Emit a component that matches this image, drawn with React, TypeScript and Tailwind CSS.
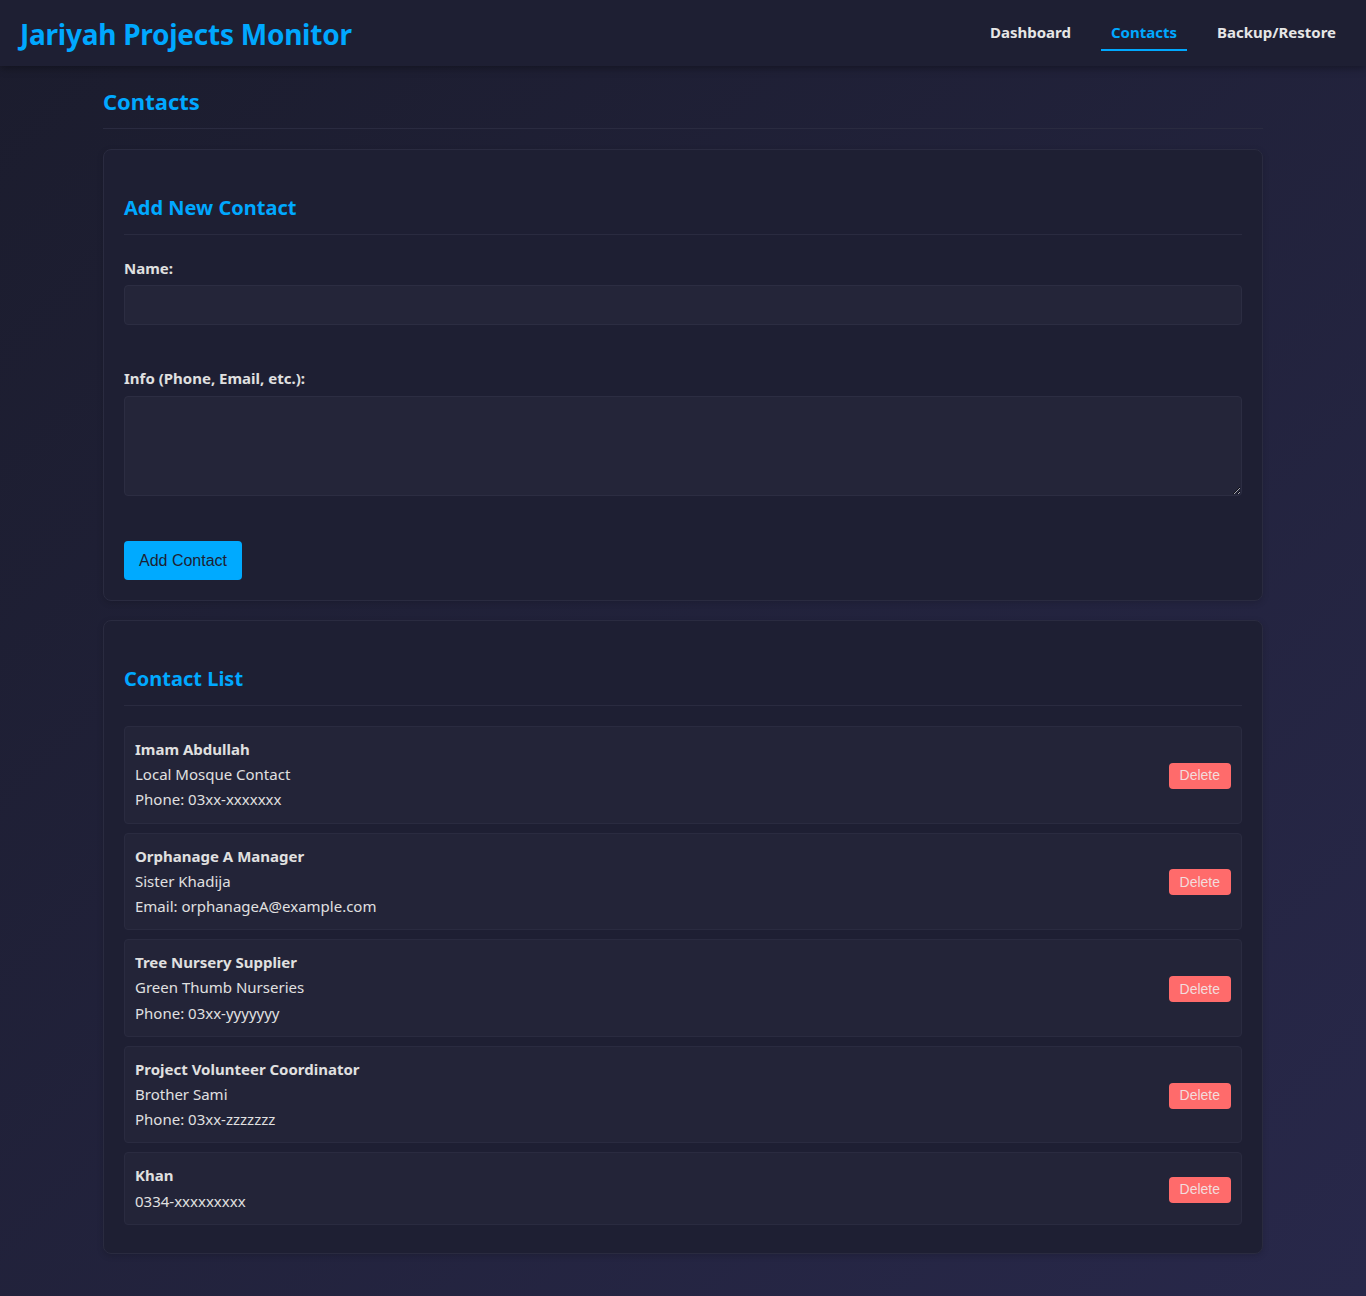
import React from "react";

const contacts = [
  { name: "Imam Abdullah", lines: ["Local Mosque Contact", "Phone: 03xx-xxxxxxx"] },
  { name: "Orphanage A Manager", lines: ["Sister Khadija", "Email: orphanageA@example.com"] },
  { name: "Tree Nursery Supplier", lines: ["Green Thumb Nurseries", "Phone: 03xx-yyyyyyy"] },
  { name: "Project Volunteer Coordinator", lines: ["Brother Sami", "Phone: 03xx-zzzzzzz"] },
  { name: "Khan", lines: ["0334-xxxxxxxxx"] },
];

export default function App() {
  return (
    <div
      className="min-h-screen text-[#e0e0e0] bg-gradient-to-br from-[#1b1c2d] to-[#28284a]"
      style={{ fontFamily: '"Noto Sans", "Open Sans", sans-serif' }}
    >
      <header className="h-[66px] bg-[#1e1f33] shadow-[0_2px_8px_rgba(0,0,0,0.35)] flex items-center justify-between px-5 relative z-10">
        <h1 className="text-[28px] font-bold text-[#00a8ff] leading-none tracking-[-0.25px] mt-[2px]">Jariyah Projects Monitor</h1>
        <nav className="flex items-center gap-5 text-[15px] font-bold text-[#e6e6e6] -mt-[2px]">
          <span className="px-[10px] pb-[6px] pt-[8px] border-b-2 border-transparent">Dashboard</span>
          <span className="px-[10px] pb-[6px] pt-[8px] border-b-2 border-[#00a8ff] text-[#00a8ff]">Contacts</span>
          <span className="px-[10px] pb-[6px] pt-[8px] border-b-2 border-transparent">Backup/Restore</span>
        </nav>
      </header>

      <main className="max-w-[1200px] mx-auto px-5 pb-10">
        <h2 className="mt-[19px] text-[22px] leading-[32px] font-bold text-[#00a8ff] pb-[11px] border-b border-[#2a2b40]">Contacts</h2>

        <section className="mt-[20px] bg-[#1e1f33] border border-[#2a2b40] rounded-lg px-5 pb-5 shadow-[0_2px_6px_rgba(0,0,0,0.15)]">
          <h3 className="pt-[44px] text-[20px] leading-[28px] font-bold text-[#00a8ff] pb-[12px] border-b border-[#2a2b40]">Add New Contact</h3>
          <label className="block mt-[23px] text-[15px] leading-[20px] font-bold text-[#e0e0e0]">Name:</label>
          <input className="block w-full mt-[7px] h-[40px] bg-[#242539] border border-[#2c2d42] rounded-[4px] outline-none" />
          <label className="block mt-[43px] text-[15px] leading-[20px] font-bold text-[#e0e0e0]">Info (Phone, Email, etc.):</label>
          <textarea className="block w-full mt-[8px] h-[100px] bg-[#242539] border border-[#2c2d42] rounded-[4px] outline-none" />
          <button
            className="mt-[45px] h-[39px] px-[15px] bg-[#00aaff] text-[#1e1f33] text-[16px] rounded-[4px]"
            style={{ fontFamily: '"Liberation Sans", Arial, sans-serif' }}
          >
            Add Contact
          </button>
        </section>

        <section className="mt-[19px] bg-[#1e1f33] border border-[#2a2b40] rounded-lg px-5 pb-[19px] shadow-[0_2px_6px_rgba(0,0,0,0.15)]">
          <h3 className="pt-[44px] text-[20px] leading-[28px] font-bold text-[#00a8ff] pb-[12px] border-b border-[#2a2b40]">Contact List</h3>
          <div className="mt-[20px]">
            {contacts.map((c) => (
              <div
                key={c.name}
                className="mb-[9px] bg-[#232438] border border-[#2a2b40] rounded-[4px] p-[10px] flex items-center justify-between"
              >
                <div className="text-[15px] leading-[25.2px]">
                  <div className="font-bold">{c.name}</div>
                  {c.lines.map((l) => (
                    <div key={l}>{l}</div>
                  ))}
                </div>
                <button
                  className="h-[26px] px-[11px] bg-[#ff6b6b] text-[#f3dcdc] text-[14px] rounded-[4px] mt-[2px]"
                  style={{ fontFamily: '"Liberation Sans", Arial, sans-serif' }}
                >
                  Delete
                </button>
              </div>
            ))}
          </div>
        </section>
      </main>
    </div>
  );
}
